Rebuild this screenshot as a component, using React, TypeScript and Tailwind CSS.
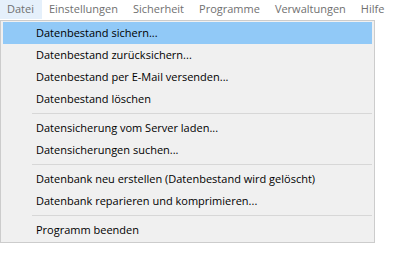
import React from 'react';

type Entry = { label: string } | 'sep';

const menus = ['Datei', 'Einstellungen', 'Sicherheit', 'Programme', 'Verwaltungen', 'Hilfe'];

const entries: Entry[] = [
  { label: 'Datenbestand sichern...' },
  { label: 'Datenbestand zurücksichern...' },
  { label: 'Datenbestand per E-Mail versenden...' },
  { label: 'Datenbestand löschen' },
  'sep',
  { label: 'Datensicherung vom Server laden...' },
  { label: 'Datensicherungen suchen...' },
  'sep',
  { label: 'Datenbank neu erstellen (Datenbestand wird gelöscht)' },
  { label: 'Datenbank reparieren und komprimieren...' },
  'sep',
  { label: 'Programm beenden' },
];

export default function App() {
  return (
    <div className="w-[404px] h-[254px] bg-white font-['Open_Sans',sans-serif] text-[11px] overflow-hidden">
      {/* menu bar */}
      <div className="flex h-[20px] items-center text-[#707070]">
        {menus.map((m, i) => (
          <div
            key={m}
            className={
              i === 0
                ? 'h-[19px] pl-[7px] pr-[8px] flex items-center bg-[#e5f0fb] self-start'
                : 'h-[19px] pl-[7px] pr-[8px] flex items-center self-start'
            }
          >
            {m}
          </div>
        ))}
      </div>

      {/* dropdown */}
      <div className="w-[375px] border border-[#cccccc] bg-[#f0f0f0] p-[1px] text-black">
        {entries.map((e, i) =>
          e === 'sep' ? (
            <div key={i} className="h-[7px] flex items-center pl-[30px] pr-[1px]">
              <div className="h-px w-full bg-[#d7d7d7]" />
            </div>
          ) : (
            <div
              key={i}
              className={
                i === 0
                  ? 'h-[22px] flex items-center pl-[33px] bg-[#91c9f7] mx-px'
                  : 'h-[22px] flex items-center pl-[33px] mx-px'
              }
            >
              {e.label}
            </div>
          )
        )}
      </div>
    </div>
  );
}
